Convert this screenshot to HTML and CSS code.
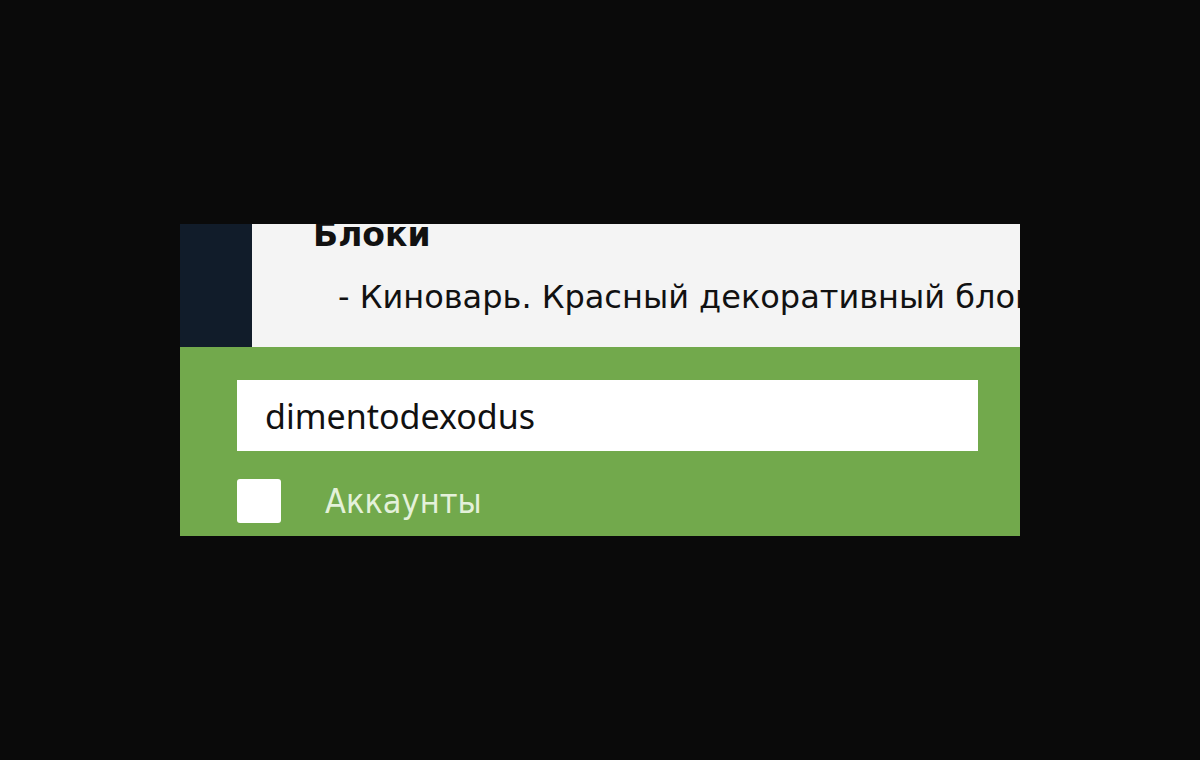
FILE: index.html
```html
<!DOCTYPE html>
<html lang="ru">
	<head>
		<meta charset="UTF-8" />
		<meta name="viewport" content="width=device-width, initial-scale=1.0" />
		<title>Блоки</title>
		<link rel="stylesheet" href="styles.css">
	</head>
	<body>
		<div class="panel">
			<div class="notes">
				<div class="rail"></div>
				<div class="notes-body">
					<h2 class="notes-title">Блоки</h2>
					<p class="notes-line">- Киноварь. Красный декоративный блок</p>
				</div>
			</div>

			<form class="search">
				<input type="text" class="search-input" value="dimentodexodus">
				<label class="search-option">
					<span class="box"></span>
					<span class="option-text">Аккаунты</span>
				</label>
			</form>
		</div>
	</body>
</html>
```

FILE: styles.css
```css
body {
	margin: 0;
	background: #0a0a0a;
	font-family: "DejaVu Sans", sans-serif;
}

.panel {
	width: 840px;
	margin: 224px 0 0 180px;
}

/* upper light strip with the text, cut off on the right */
.notes {
	display: flex;
	height: 123px;
	background: #f4f4f4;
	overflow: hidden;
}

.rail {
	width: 72px;
	flex-shrink: 0;
	background: #111c2a;
}

.notes-body {
	flex: 1;
	min-width: 0;
	padding-left: 61px;
	white-space: nowrap;
}

.notes-title {
	margin: -11px 0 0;
	font-size: 33px;
	font-weight: bold;
	line-height: 44px;
	color: #111;
}

.notes-line {
	margin: 18px 0 0 25px;
	font-size: 32px;
	line-height: 44px;
	color: #111;
}

/* green search block */
.search {
	background: #72a94c;
	padding: 33px 42px 13px 57px;
	display: flex;
	flex-direction: column;
	gap: 28px;
}

.search-input {
	height: 71px;
	box-sizing: border-box;
	border: none;
	outline: none;
	padding: 0 28px;
	font-family: "Noto Sans", sans-serif;
	font-size: 34px;
	color: #111;
	background: #fff;
}

.search-option {
	display: flex;
	align-items: center;
	gap: 44px;
}

.box {
	width: 44px;
	height: 44px;
	border-radius: 3px;
	background: #fff;
}

.option-text {
	font-family: "DejaVu Sans Condensed", "DejaVu Sans", sans-serif;
	font-size: 34px;
	color: #e4f1da;
}
```
